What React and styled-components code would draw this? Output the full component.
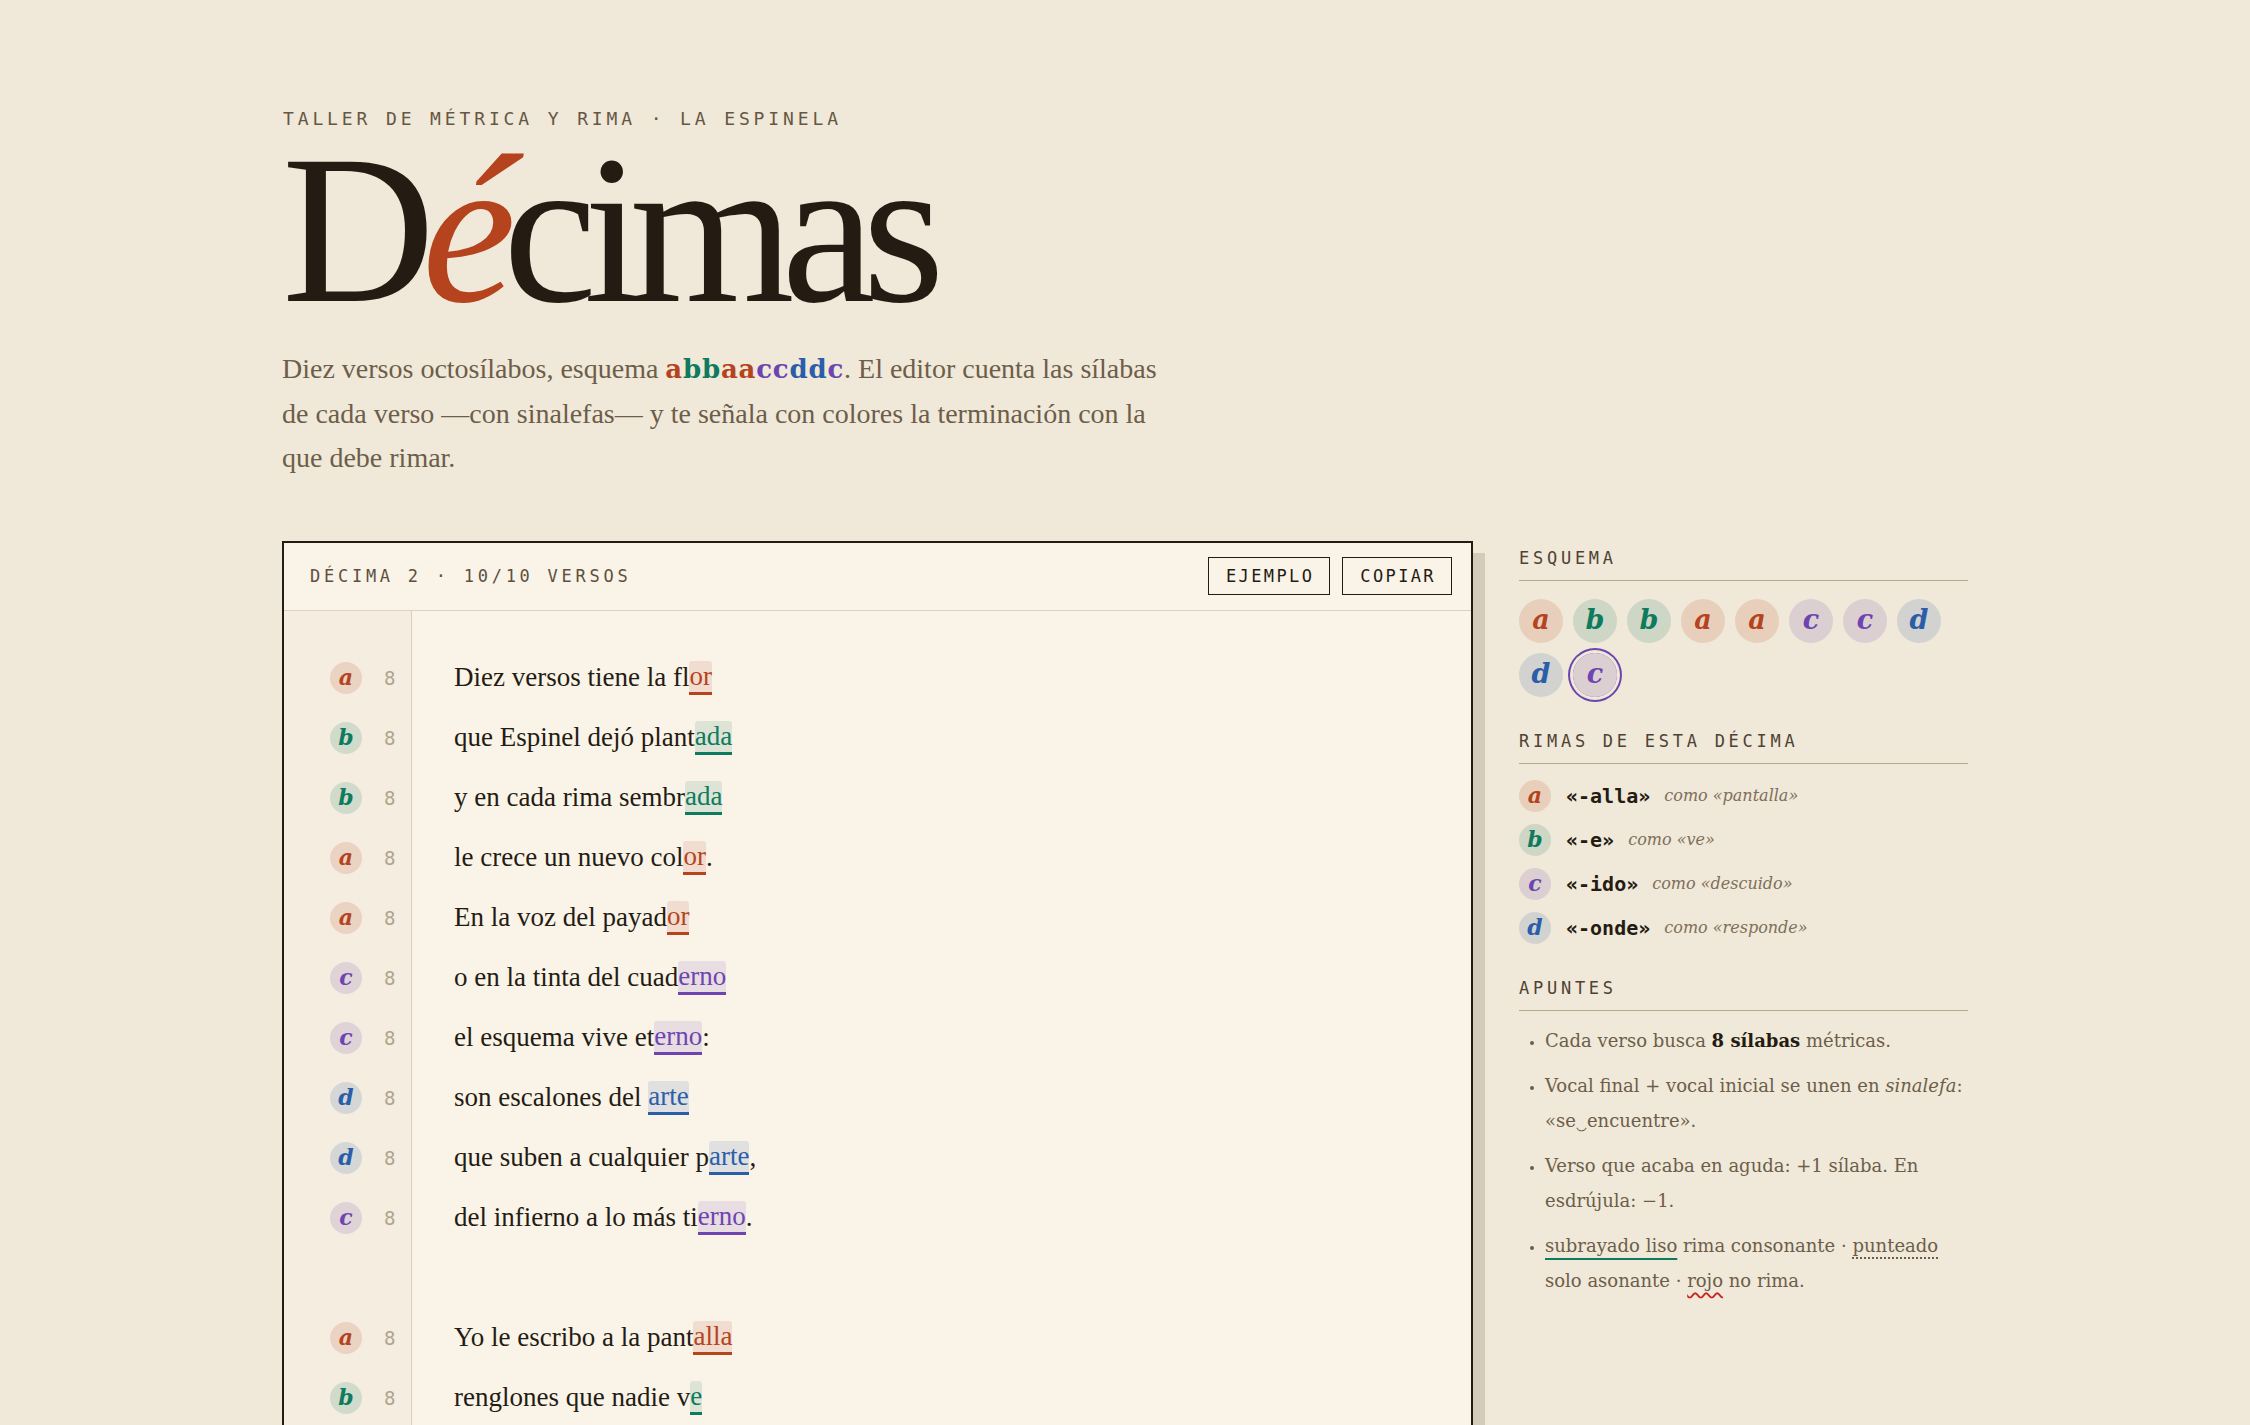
import React from 'react';
import styled, { createGlobalStyle, css } from 'styled-components';

const MONO = `"DejaVu Sans Mono", "Liberation Mono", monospace`;
const SERIF = `"Liberation Serif", "Times New Roman", serif`;
const BOOK = `"DejaVu Serif", "Liberation Serif", serif`;

const INK = '#241c13';
const MUTED = '#6c5e4a';
const RHYME = { a: '#b4431e', b: '#0e7a5e', c: '#6c45b0', d: '#2b5ea9' };

// hex -> rgba, for the pale rhyme tints
const tint = (hex, a) => {
    const n = parseInt(hex.slice(1), 16);
    return `rgba(${n >> 16}, ${(n >> 8) & 255}, ${n & 255}, ${a})`;
};

const GlobalStyle = createGlobalStyle`
  * { box-sizing: border-box; }
  html, body { margin: 0; background: #f0e8d8; }
  body {
    color: ${INK};
    font-family: ${SERIF};
    -webkit-font-smoothing: antialiased;
  }
`;

const monoLabel = css`
    font-family: ${MONO};
    font-size: 17px;
    letter-spacing: 0.22em;
    color: ${MUTED};
`;

const Page = styled.div`
    width: 1686px;
    margin: 0 auto;
    padding: 106px 0 140px;
`;

const Eyebrow = styled.div`
    ${monoLabel};
    font-size: 18px;
    line-height: 26px;
    letter-spacing: 0.215em;
    color: #655743;
    padding-left: 1px;
`;

const Title = styled.h1`
    margin: 8px 0 0;
    font-family: ${SERIF};
    font-weight: 400;
    font-size: 212px;
    line-height: 180px;
    letter-spacing: -0.062em;
    color: ${INK};

    & em {
        font-style: italic;
        color: ${RHYME.a};
    }
`;

const Lede = styled.p`
    margin: 27px 0 0;
    font-size: 28px;
    line-height: 44.5px;
    color: ${MUTED};
    white-space: nowrap;
`;

const SchemeWord = styled.strong`
    font-family: ${BOOK};
    font-weight: 700;
    font-size: 26px;
    letter-spacing: 0.03em;
`;

const SchemeLetter = styled.span`
    color: ${p => RHYME[p.$r]};
`;

const Layout = styled.div`
    display: grid;
    grid-template-columns: 1191px 449px;
    column-gap: 46px;
    align-items: start;
    margin-top: 60px;
`;

const Card = styled.section`
    background: #faf3e8;
    border: 2px solid ${INK};
    box-shadow: 12px 12px 0 #d4ccba;
`;

const CardHeader = styled.header`
    height: 68px;
    display: flex;
    align-items: center;
    justify-content: space-between;
    padding: 0 19px 0 26px;
    border-bottom: 1.5px solid #dcd2bf;
`;

const CardLabel = styled.span`
    ${monoLabel};
    color: #5e503d;
`;

const Actions = styled.div`
    display: flex;
    gap: 12px;
`;

const Button = styled.button`
    height: 38px;
    padding: 0 15px 0 17px;
    border: 1.5px solid ${INK};
    background: transparent;
    font-family: ${MONO};
    font-size: 17px;
    letter-spacing: 0.14em;
    color: ${INK};
    cursor: pointer;
`;

const Row = styled.div`
    display: grid;
    grid-template-columns: 128px 1fr;
    height: ${p => p.$h ?? 60}px;
`;

const Gutter = styled.div`
    display: flex;
    align-items: center;
    gap: 22px;
    padding-left: 46px;
    background: #f4ede0;
    border-right: 1.5px solid #dad0bc;
`;

const Chip = styled.span`
    flex: none;
    display: inline-flex;
    align-items: center;
    justify-content: center;
    width: ${p => p.$size}px;
    height: ${p => p.$size}px;
    border-radius: 50%;
    background: ${p => tint(RHYME[p.$r], 0.15)};
    color: ${p => RHYME[p.$r]};
    font-family: ${BOOK};
    font-style: italic;
    font-weight: 700;
    font-size: ${p => p.$fs}px;
    line-height: 1;
    padding-bottom: 2px;
    ${p => p.$active && css`
        box-shadow: 0 0 0 3px #f0e8d8, 0 0 0 5px ${RHYME[p.$r]};
    `}
`;

const Count = styled.span`
    font-family: ${MONO};
    font-size: 19px;
    color: #b1a48e;
`;

const Verse = styled.div`
    display: flex;
    align-items: center;
    padding-left: 42px;
    font-size: 27px;
    color: ${INK};
    white-space: pre;
`;

const Rhyme = styled.span`
    color: ${p => RHYME[p.$r]};
    background: ${p => tint(RHYME[p.$r], 0.12)};
    border-bottom: 3px solid ${p => RHYME[p.$r]};
    border-radius: 3px 3px 0 0;
`;

const Aside = styled.aside`
    display: flex;
    flex-direction: column;
    gap: 33px;
    padding-top: 6px;
`;

const SectionTitle = styled.h2`
    ${monoLabel};
    margin: 0 0 ${p => p.$space ?? 18}px;
    padding-bottom: 11px;
    border-bottom: 1.5px solid #b9aa8c;
    font-weight: 400;
    line-height: 22px;
    letter-spacing: 0.22em;
    color: #4f4233;
`;

const ChipGrid = styled.div`
    display: flex;
    flex-wrap: wrap;
    gap: 10px;
`;

const RhymeList = styled.div`
    display: flex;
    flex-direction: column;
    gap: 12px;
`;

const RhymeItem = styled.div`
    display: flex;
    align-items: center;
`;

const Ending = styled.span`
    margin-left: 15px;
    font-family: ${MONO};
    font-weight: 700;
    font-size: 20px;
    color: ${INK};
`;

const Example = styled.span`
    margin-left: 14px;
    font-family: ${BOOK};
    font-style: italic;
    font-size: 16px;
    color: #7d6f5a;
`;

const Notes = styled.ul`
    margin: 0;
    padding: 0 0 0 26px;
    font-family: ${BOOK};
    font-size: 18px;
    line-height: 35px;
    color: ${MUTED};
`;

const Note = styled.li`
    margin-bottom: 10px;
    white-space: nowrap;

    &::marker {
        font-size: 13px;
        color: ${MUTED};
    }

    & strong {
        color: ${INK};
    }
`;

const Mark = styled.span`
    text-decoration-line: underline;
    text-underline-offset: 6px;
    ${p => p.$kind === 'solid' && css`
        text-decoration-color: ${RHYME.b};
        text-decoration-thickness: 2px;
    `}
    ${p => p.$kind === 'dotted' && css`
        text-decoration-style: dotted;
        text-decoration-color: ${MUTED};
        text-decoration-thickness: 2px;
    `}
    ${p => p.$kind === 'wavy' && css`
        text-decoration-style: wavy;
        text-decoration-color: #c8281e;
        text-decoration-thickness: 1.5px;
        text-underline-offset: 5px;
    `}
`;

const stanzas = [
    [
        ['a', 'Diez versos tiene la fl', 'or', ''],
        ['b', 'que Espinel dejó plant', 'ada', ''],
        ['b', 'y en cada rima sembr', 'ada', ''],
        ['a', 'le crece un nuevo col', 'or', '.'],
        ['a', 'En la voz del payad', 'or', ''],
        ['c', 'o en la tinta del cuad', 'erno', ''],
        ['c', 'el esquema vive et', 'erno', ':'],
        ['d', 'son escalones del ', 'arte', ''],
        ['d', 'que suben a cualquier p', 'arte', ','],
        ['c', 'del infierno a lo más ti', 'erno', '.'],
    ],
    [
        ['a', 'Yo le escribo a la pant', 'alla', ''],
        ['b', 'renglones que nadie v', 'e', ''],
        ['b', 'con la tinta de la f', 'e', ''],
        ['a', 'como quien libra bat', 'alla', ''],
        ['a', 'contra el silencio que c', 'alla', ';'],
        ['c', 'cada verso es un lat', 'ido', ''],
        ['c', 'que regresa del descu', 'ido', ''],
        ['d', 'y la métrica resp', 'onde', ''],
        ['d', 'desde el sitio donde esc', 'onde', ''],
        ['c', 'su secreto más quer', 'ido', '.'],
    ],
];

const scheme = 'abbaaccddc'.split('');

const endings = [
    ['a', '«-alla»', 'como «pantalla»'],
    ['b', '«-e»', 'como «ve»'],
    ['c', '«-ido»', 'como «descuido»'],
    ['d', '«-onde»', 'como «responde»'],
];

function VerseRow({ r, head, end, tail }) {
    return (
        <Row>
            <Gutter>
                <Chip $r={r} $size={32} $fs={22}>{r}</Chip>
                <Count>8</Count>
            </Gutter>
            <Verse>
                {head}<Rhyme $r={r}>{end}</Rhyme>{tail}
            </Verse>
        </Row>
    );
}

function Editor() {
    return (
        <Card>
            <CardHeader>
                <CardLabel>DÉCIMA 2 · 10/10 VERSOS</CardLabel>
                <Actions>
                    <Button>EJEMPLO</Button>
                    <Button>COPIAR</Button>
                </Actions>
            </CardHeader>
            <Row $h={37}><Gutter /><div /></Row>
            {stanzas.map((stanza, i) => (
                <React.Fragment key={i}>
                    {i > 0 && <Row><Gutter /><div /></Row>}
                    {stanza.map(([r, head, end, tail], j) => (
                        <VerseRow key={j} r={r} head={head} end={end} tail={tail} />
                    ))}
                </React.Fragment>
            ))}
            <Row $h={40}><Gutter /><div /></Row>
        </Card>
    );
}

function Sidebar() {
    return (
        <Aside>
            <section>
                <SectionTitle>ESQUEMA</SectionTitle>
                <ChipGrid>
                    {scheme.map((r, i) => (
                        <Chip key={i} $r={r} $size={44} $fs={27} $active={i === scheme.length - 1}>{r}</Chip>
                    ))}
                </ChipGrid>
            </section>
            <section>
                <SectionTitle $space={16}>RIMAS DE ESTA DÉCIMA</SectionTitle>
                <RhymeList>
                    {endings.map(([r, end, ex]) => (
                        <RhymeItem key={r}>
                            <Chip $r={r} $size={32} $fs={22}>{r}</Chip>
                            <Ending>{end}</Ending>
                            <Example>{ex}</Example>
                        </RhymeItem>
                    ))}
                </RhymeList>
            </section>
            <section>
                <SectionTitle $space={12}>APUNTES</SectionTitle>
                <Notes>
                    <Note>Cada verso busca <strong>8 sílabas</strong> métricas.</Note>
                    <Note>Vocal final + vocal inicial se unen en <em>sinalefa</em>:<br />«se‿encuentre».</Note>
                    <Note>Verso que acaba en aguda: +1 sílaba. En<br />esdrújula: −1.</Note>
                    <Note>
                        <Mark $kind="solid">subrayado liso</Mark> rima consonante · <Mark $kind="dotted">punteado</Mark><br />
                        solo asonante · <Mark $kind="wavy">rojo</Mark> no rima.
                    </Note>
                </Notes>
            </section>
        </Aside>
    );
}

export default function App() {
    return (
        <>
            <GlobalStyle />
            <Page>
                <Eyebrow>TALLER DE MÉTRICA Y RIMA · LA ESPINELA</Eyebrow>
                <Title>D<em>é</em>cimas</Title>
                <Lede>
                    Diez versos octosílabos, esquema{' '}
                    <SchemeWord>
                        {scheme.map((r, i) => <SchemeLetter key={i} $r={r}>{r}</SchemeLetter>)}
                    </SchemeWord>
                    . El editor cuenta las sílabas<br />
                    de cada verso —con sinalefas— y te señala con colores la terminación con la<br />
                    que debe rimar.
                </Lede>
                <Layout>
                    <Editor />
                    <Sidebar />
                </Layout>
            </Page>
        </>
    );
}
